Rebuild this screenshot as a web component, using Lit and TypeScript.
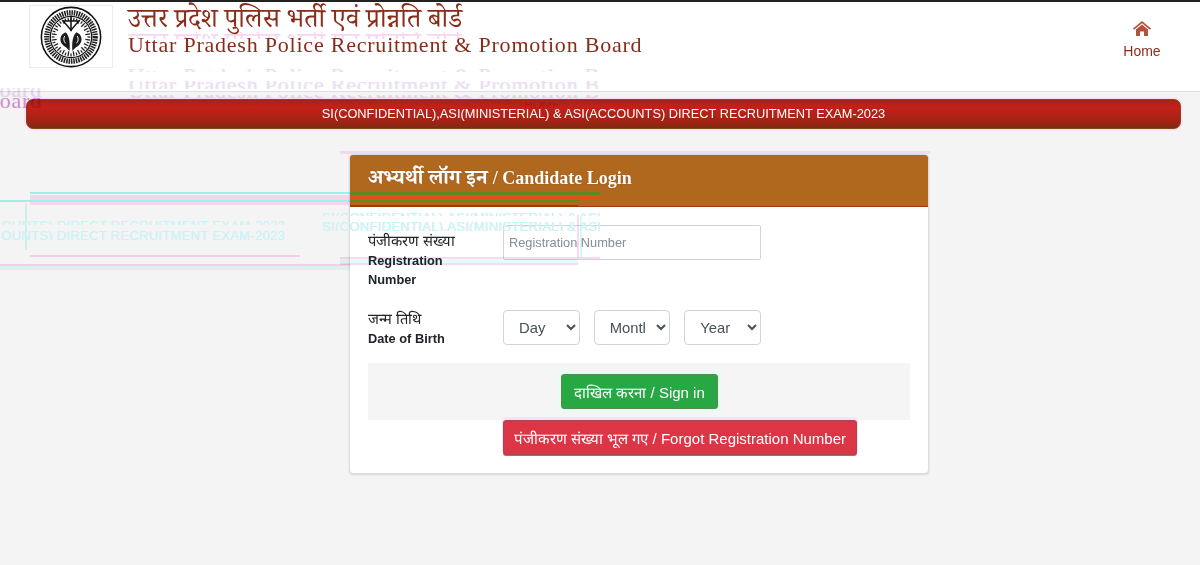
import { LitElement, html, css, svg, unsafeCSS } from "lit";
import { customElement } from "lit/decorators.js";

const SERIF = unsafeCSS('"Liberation Serif", "Noto Serif Devanagari", "Noto Sans Devanagari", serif');

const HI = "उत्तर प्रदेश पुलिस भर्ती एवं प्रोन्नति बोर्ड";
const EN = "Uttar Pradesh Police Recruitment & Promotion Board";
const BANNER = "SI(CONFIDENTIAL),ASI(MINISTERIAL) & ASI(ACCOUNTS) DIRECT RECRUITMENT EXAM-2023";
const EN_CUT = "Uttar Pradesh Police Recruitment & Promotion B";
const BAN_A = "SI(CONFIDENTIAL),ASI(MINISTERIAL) & ASI";
const BAN_B = "OUNTS) DIRECT RECRUITMENT EXAM-2023";

// Compression ghosts of the reference: thin horizontal slices of repeated text.
type Slice = { x: number; y: number; w: number; h: number; text: string; top: number; cls: string; end?: boolean };
const SLICES: Slice[] = [
  { x: 128, y: 32, w: 334, h: 7, text: HI, top: 6.5, cls: "s-hi" },
  { x: 128, y: 68, w: 470, h: 4, text: EN_CUT, top: 5.5, cls: "s-en" },
  { x: 128, y: 81, w: 470, h: 8, text: EN_CUT, top: 0, cls: "s-en" },
  { x: 128, y: 95, w: 470, h: 4, text: EN_CUT, top: -6, cls: "s-en" },
  { x: 0, y: 88, w: 42, h: 10, text: "oard", top: -3, cls: "s-en", end: true },
  { x: 0, y: 98, w: 42, h: 10, text: "oard", top: -2, cls: "s-en s-red", end: true },
  { x: 524, y: 102, w: 34, h: 6, text: "HOME", top: 0, cls: "s-home" },
  { x: 0, y: 221, w: 285, h: 4, text: BAN_B, top: 3, cls: "s-ban", end: true },
  { x: 0, y: 231, w: 285, h: 9, text: BAN_B, top: 0, cls: "s-ban", end: true },
  { x: 322, y: 213, w: 278, h: 3, text: BAN_A, top: 3, cls: "s-ban" },
  { x: 322, y: 222, w: 278, h: 9, text: BAN_A, top: 0, cls: "s-ban" },
];

// x, y, w, h, colour, blended with what lies below
const LINES: [number, number, number, number, string, boolean][] = [
  [340, 151, 590, 3, "#fde3f7", true],
  [30, 192, 320, 2, "#a5fbf3", true],
  [30, 195, 320, 5, "#fde2f6", true],
  [0, 200, 350, 2, "#a5fbf3", true],
  [30, 202, 320, 3, "#fde2f6", true],
  [350, 192, 250, 3, "#5f8a22", false],
  [350, 195, 250, 5, "#e0521c", false],
  [350, 200, 230, 2, "#5f8a22", false],
  [350, 205, 228, 1, "#c81e10", false],
  [25, 203, 2, 47, "#d4fbf6", true],
  [30, 255, 270, 2, "#fcd9f3", true],
  [0, 264, 350, 2, "#fcd9f3", true],
  [0, 266, 350, 4, "#e6fcf6", true],
  [340, 257, 260, 2, "#fcd9f3", true],
  [340, 259, 238, 4, "#e4fcf8", true],
  [340, 263, 238, 2, "#fcd9f3", true],
  [577, 215, 2, 43, "#fcd9f3", true],
  [580, 215, 2, 43, "#d4fbf6", true],
];

@customElement("app-root")
export class AppRoot extends LitElement {
  static styles = css`
    :host { display: block; width: 1200px; height: 565px; position: relative; overflow: hidden; background: #f4f4f4; font-family: "Liberation Sans", Arial, sans-serif; }
    .top { height: 89px; background: #fff; border-top: 2px solid #222; border-bottom: 1px solid #dedede; display: flex; box-sizing: content-box; padding-left: 29px; }
    .logo { width: 82px; height: 61px; margin-top: 3px; border: 1px solid #ececec; display: flex; align-items: center; justify-content: center; }
    .titles { margin-left: 15px; color: #8a2c1a; font-family: ${SERIF}; }
    .hi { font-size: 26.8px; line-height: 30px; margin-top: 1px; }
    .en { font-size: 22px; line-height: 26px; letter-spacing: 0.78px; margin-top: -1px; }
    .home { margin-left: auto; width: 116px; display: flex; flex-direction: column; align-items: center; gap: 6px; padding-top: 18px; color: #8e2a1a; font-size: 14px; }
    .banner { margin: 7px 19px 0 26px; height: 30px; border-radius: 7px; border: 1px solid #7a4a1a; box-sizing: border-box; background: linear-gradient(#a52414, #c4201a 25%, #a42214 75%, #7f2a12); color: #fff; text-align: center; font-size: 12.8px; line-height: 28px; box-shadow: 0 0 0 2px #fde0f6; }
    .card { width: 580px; margin: 25px 0 0 349px; height: 320px; background: #fff; border: 1px solid #dcdcdc; border-radius: 4px; box-sizing: border-box; box-shadow: 0 1px 2px rgba(0,0,0,.12); }
    .head { height: 52px; background: #b0671e; border-bottom: 1px solid #a33a10; border-radius: 3px 3px 0 0; color: #fff; font-family: ${SERIF}; font-weight: bold; font-size: 20.8px; line-height: 44px; padding-left: 18px; box-sizing: border-box; text-shadow: 0 0 1px rgba(60,30,0,.4); }
    .head span { font-size: 18px; }
    .body { padding: 18px 18px 0; }
    .row { display: flex; }
    .lab { width: 135px; padding-top: 6px; font-size: 12.8px; font-weight: bold; color: #212529; line-height: 19px; flex: none; }
    .h { font-weight: normal; font-size: 14.7px; display: block; line-height: 20px; }
    .e { display: block; width: 90px; }
    input { width: 258px; height: 35px; box-sizing: border-box; border: 1px solid #ced4da; border-radius: 2px; padding: 0 5px; font: 12.8px "Liberation Sans", sans-serif; }
    input::placeholder { color: #868e96; }
    .dob { margin-top: 21px; }
    .dob .lab { padding-top: 0; margin-top: -1px; }
    .dob .e { width: auto; }
    .sels { display: flex; gap: 14px; width: 258px; }
    select { flex: 1; min-width: 0; height: 35px; box-sizing: border-box; border: 1px solid #ced4da; border-radius: 4px; background: #fff; color: #495057; font: 14.8px "Liberation Sans", sans-serif; padding: 0 8px 0 11px; }
    .foot { margin-top: 15px; height: 57px; background: #f5f5f5; display: flex; justify-content: center; padding-top: 11px; box-sizing: border-box; }
    .btn { height: 35px; border-radius: 3px; border: 1px solid #8a5a3a; color: #fff; font: 15px "Liberation Sans", sans-serif; box-sizing: border-box; display: flex; align-items: center; justify-content: center; }
    .g { width: 157px; background: #28a745; margin-left: 1px; border-color: #5d8a4a; box-shadow: 0 0 0 3px #e6fdf4; }
    .r { width: 354px; background: #dc3545; margin-left: 135px; border-color: #a04a4a; box-shadow: 0 -2px 0 1px #fde0f6, 0 1px 0 #f0457a; }
    .slice { position: absolute; clip-path: inset(0); display: flex; white-space: nowrap; pointer-events: none; mix-blend-mode: multiply; }
    .slice.end { justify-content: flex-end; }
    .slice span { position: relative; flex: none; }
    .s-en { font: 22px ${SERIF}; letter-spacing: .78px; color: #fbd6f3; text-shadow: 1px 0 #e6fdfb, -1px 0 #e6fdfb; }
    .s-red { color: #f08ad8; }
    .s-hi { font: 26.8px ${SERIF}; color: #f6d8f2; }
    .s-home { font: 12px "Liberation Sans", sans-serif; color: #f0a0b0; }
    .s-ban { font: 13px "Liberation Sans", sans-serif; letter-spacing: .3px; color: #b8fbf4; text-shadow: 1px 0 #fde4f7; mix-blend-mode: normal; }
    .line { position: absolute; pointer-events: none; }
    .line.blend { mix-blend-mode: multiply; }
  `;

  seal() {
    const ticks = [];
    for (let i = 0; i < 40; i++) {
      const a = (i / 40) * Math.PI * 2;
      const r1 = i % 2 ? 15 : 17;
      ticks.push(svg`<line x1=${32 + r1 * Math.cos(a)} y1=${32 + r1 * Math.sin(a)} x2=${32 + 20 * Math.cos(a)} y2=${32 + 20 * Math.sin(a)} stroke="#222" stroke-width="1.3"/>`);
    }
    return html`<svg width="62" height="62" viewBox="0 0 64 64">
      <circle cx="32" cy="32" r="30.6" fill="#fff" stroke="#111" stroke-width="1.6"/>
      <circle cx="32" cy="32" r="25" fill="none" stroke="#222" stroke-width="5.4" stroke-dasharray="1.6 .9"/>
      <circle cx="32" cy="32" r="21.4" fill="#fff" stroke="#111" stroke-width="1.3"/>
      ${ticks}
      <path d="M24 15.5h16L32 25z" fill="#fff" stroke="#111" stroke-width="1.5"/>
      <path d="M32 10v16" stroke="#111" stroke-width="1.6"/>
      <path d="M26.5 27c-5.5 2-7 8-3.5 12.5 2 2.6 5.5 3.5 7.5 7 .6-6.5.4-15.5-4-19.5z" fill="#1c1c1c"/>
      <path d="M37.5 27c5.5 2 7 8 3.5 12.5-2 2.6-5.5 3.5-7.5 7-.6-6.5-.4-15.5 4-19.5z" fill="#1c1c1c"/>
      <path d="M25.5 31c-1.6 2.5-1 5.5.8 7.5M38.5 31c1.6 2.5 1 5.5-.8 7.5" stroke="#fff" stroke-width="1" fill="none"/>
    </svg>`;
  }

  render() {
    return html`
      <div class="top">
        <div class="logo">${this.seal()}</div>
        <div class="titles"><div class="hi">${HI}</div><div class="en">${EN}</div></div>
        <div class="home">
          <svg width="20" height="17" viewBox="0 0 20 17"><path d="M10 1 1 8.5l1 1.2L10 3.2l8 6.5 1-1.2z" fill="#b5523e"/><path d="M4 9.5 10 4.6l6 4.9V16h-4v-4.5H8V16H4z" fill="#b5523e"/></svg>
          <span>Home</span>
        </div>
      </div>
      <div class="banner">${BANNER}</div>
      <div class="card">
        <div class="head">अभ्यर्थी लॉग इन <span>/ Candidate Login</span></div>
        <div class="body">
          <div class="row">
            <div class="lab"><span class="h">पंजीकरण संख्या</span><span class="e">Registration Number</span></div>
            <input placeholder="Registration Number" />
          </div>
          <div class="row dob">
            <div class="lab"><span class="h">जन्म तिथि</span><span class="e">Date of Birth</span></div>
            <div class="sels">
              <select><option>Day</option></select>
              <select><option>Month</option></select>
              <select><option>Year</option></select>
            </div>
          </div>
          <div class="foot"><div class="btn g">दाखिल करना / Sign in</div></div>
          <div class="btn r">पंजीकरण संख्या भूल गए / Forgot Registration Number</div>
        </div>
      </div>
      ${LINES.map(([x, y, w, h, c, blend]) => html`<div class="line ${blend ? "blend" : ""}" style="left:${x}px;top:${y}px;width:${w}px;height:${h}px;background:${c}"></div>`)}
      ${SLICES.map((s) => html`<div class="slice ${s.cls} ${s.end ? "end" : ""}" style="left:${s.x}px;top:${s.y}px;width:${s.w}px;height:${s.h}px"><span style="top:${s.top}px;line-height:${s.h}px">${s.text}</span></div>`)}
    `;
  }
}
